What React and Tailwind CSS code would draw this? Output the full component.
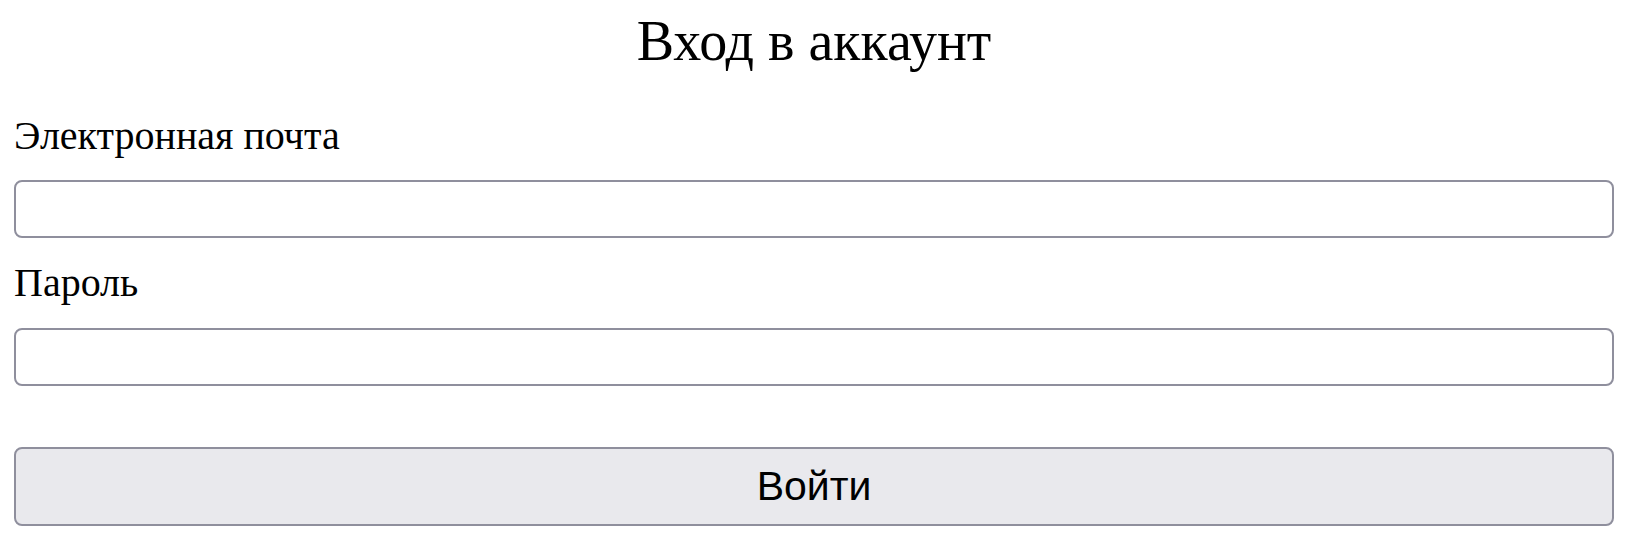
export default function App() {
  return (
    <div className="bg-white w-[1628px] h-[552px] px-[14px] flex flex-col font-['Liberation_Serif',serif] text-black">
      <h1 className="mt-[13px] text-center text-[56px] leading-none font-normal">
        Вход в аккаунт
      </h1>
      <label className="mt-[47px] text-[40px] leading-none">
        Электронная почта
      </label>
      <input type="email" className="mt-[24px] h-[58px] w-full border-2 border-[#8f8f9d] rounded-[8px] bg-white outline-none" />
      <label className="mt-[25px] text-[40px] leading-none">
        Пароль
      </label>
      <input type="password" className="mt-[25px] h-[58px] w-full border-2 border-[#8f8f9d] rounded-[8px] bg-white outline-none" />
      <button className="mt-[61px] h-[79px] w-full border-2 border-[#8f8f9d] rounded-[8px] bg-[#e9e9ed] text-black text-[41px] flex items-center justify-center font-['Liberation_Sans',Arial,sans-serif]">
        Войти
      </button>
    </div>
  );
}
